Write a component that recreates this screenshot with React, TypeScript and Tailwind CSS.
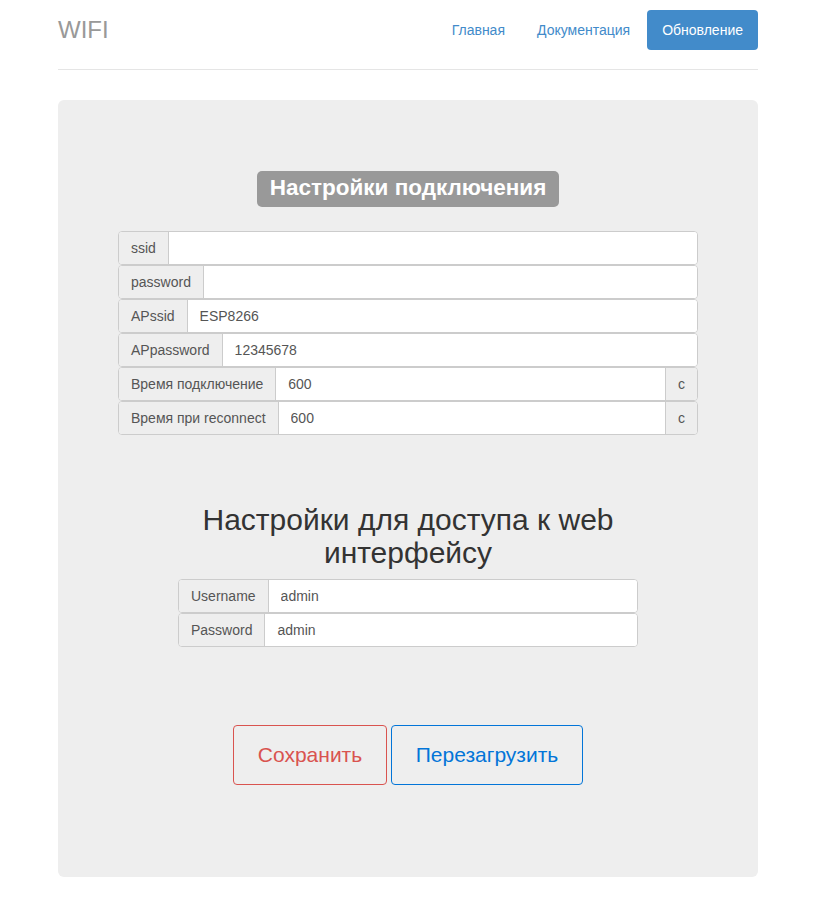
import React from 'react'

const connRows = [
  { label: 'ssid', value: '', suffix: '' },
  { label: 'password', value: '', suffix: '' },
  { label: 'APssid', value: 'ESP8266', suffix: '' },
  { label: 'APpassword', value: '12345678', suffix: '' },
  { label: 'Время подключение', value: '600', suffix: 'с' },
  { label: 'Время при reconnect', value: '600', suffix: 'с' },
]

const webRows = [
  { label: 'Username', value: 'admin' },
  { label: 'Password', value: 'admin' },
]

function InputRow({ label, value, suffix }: { label: string; value: string; suffix?: string }) {
  return (
    <div className="flex h-[34px] w-full border border-[#ccc] rounded-[4px] bg-white text-[14px] text-[#555] overflow-hidden">
      <span className="flex items-center px-3 bg-[#eee] border-r border-[#ccc] whitespace-nowrap">{label}</span>
      <input
        readOnly
        value={value}
        className="flex-1 min-w-0 px-3 bg-white text-[#555] outline-none"
      />
      {suffix && (
        <span className="flex items-center px-3 bg-[#eee] border-l border-[#ccc]">{suffix}</span>
      )}
    </div>
  )
}

export default function App() {
  return (
    <div className="min-h-[916px] bg-white font-['Liberation_Sans',Arial,sans-serif]">
      <div className="w-[700px] ml-[58px]">
        {/* Header */}
        <div className="flex items-center justify-between pt-[10px] pb-[19px] border-b border-[#e5e5e5]">
          <h3 className="text-[24px] leading-[40px] text-[#999]">WIFI</h3>
          <ul className="flex items-center gap-[2px] text-[14px]">
            <li><a className="block px-[15px] leading-[40px] text-[#428bca]">Главная</a></li>
            <li><a className="block px-[15px] leading-[40px] text-[#428bca]">Документация</a></li>
            <li><a className="block px-[15px] leading-[40px] text-white bg-[#428bca] rounded-[4px]">Обновление</a></li>
          </ul>
        </div>

        {/* Jumbotron */}
        <div className="mt-[30px] bg-[#eee] rounded-[6px] h-[777px] px-[60px] pt-[71px]">
          <div className="flex justify-center">
            <span className="inline-block bg-[#999] text-white font-bold text-[22.5px] leading-[33px] pb-[3px] px-[13px] rounded-[5px]">
              Настройки подключения
            </span>
          </div>
          <div className="mt-[24px] flex flex-col">
            {connRows.map((r) => (
              <InputRow key={r.label} label={r.label} value={r.value} suffix={r.suffix} />
            ))}
          </div>

          <div className="w-[460px] mx-auto mt-[68px]">
            <h2 className="text-[30px] leading-[33px] text-[#333] text-center">
              Настройки для доступа к web интерфейсу
            </h2>
            <div className="mt-[10px] flex flex-col">
              {webRows.map((r) => (
                <InputRow key={r.label} label={r.label} value={r.value} />
              ))}
            </div>
          </div>

          <div className="mt-[78px] flex justify-center gap-[4px]">
            <button className="w-[154px] h-[60px] border border-[#d9534f] rounded-[4px] text-[#d9534f] text-[21px]">
              Сохранить
            </button>
            <button className="w-[192px] h-[60px] border border-[#0275d8] rounded-[4px] text-[#0275d8] text-[21px]">
              Перезагрузить
            </button>
          </div>
        </div>
      </div>
    </div>
  )
}
